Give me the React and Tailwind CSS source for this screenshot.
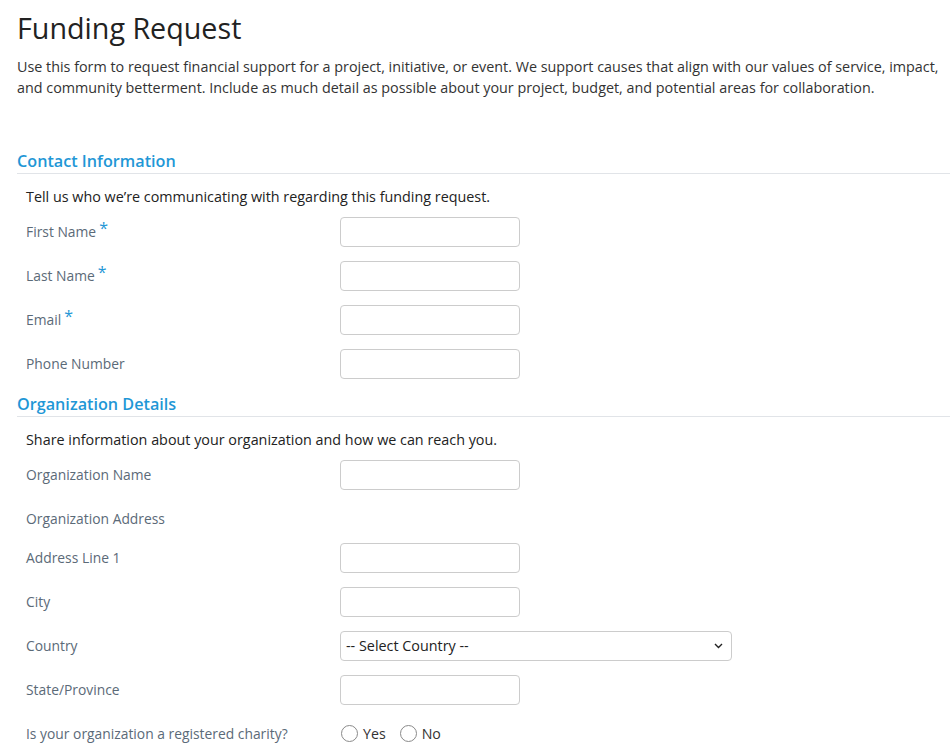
import React from 'react';

const Label = ({ children, required }) => (
    <div className="w-[314px] shrink-0 text-[13.85px] leading-[20px] text-[#5b6a78] -mt-[1px]">
        {children}
        {required && <span className="text-[#1f97d6] text-[16px] leading-none ml-[3px] relative -top-[3px]">*</span>}
    </div>
);

const TextRow = ({ label, required, className = 'mt-[14px]' }) => (
    <div className={`flex items-center h-[30px] ${className}`}>
        <Label required={required}>{label}</Label>
        <input type="text" className="w-[180px] h-[30px] border border-[#cccccc] rounded-[4px] bg-white outline-none px-2 text-[14px]" />
    </div>
);

const SectionHeading = ({ children, className = '' }) => (
    <h2 className={`text-[16.2px] font-semibold text-[#1f97d6] leading-[22px] border-b border-[#e1e4e8] pb-[1px] ${className}`}>
        {children}
    </h2>
);

const Radio = ({ label }) => (
    <label className="flex items-center gap-[5px] mr-[14px]">
        <span className="w-[17px] h-[17px] rounded-full border-[1.5px] border-[#8a8a8a] bg-white inline-block" />
        <span className="text-[14.2px] text-[#333]">{label}</span>
    </label>
);

export default function App() {
    return (
        <div className="bg-white min-h-screen pl-[17px] pt-[10px] text-[#333]" style={{ fontFamily: '"Open Sans", "Noto Sans", sans-serif' }}>
            <h1 className="text-[28.7px] leading-[36px] text-[#222] font-normal">Funding Request</h1>
            <p className="mt-[10px] text-[14.35px] leading-[21px] text-[#333] pr-1">
                Use this form to request financial support for a project, initiative, or event. We support causes that align with our values of service, impact, and community betterment. Include as much detail as possible about your project, budget, and potential areas for collaboration.
            </p>

            {/* Contact Information */}
            <SectionHeading className="mt-[52px]">Contact Information</SectionHeading>
            <div className="pl-[9px]">
                <p className="mt-[12px] text-[14.35px] leading-[21px] text-[#222]">Tell us who we’re communicating with regarding this funding request.</p>
                <TextRow label="First Name" required className="mt-[10px]" />
                <TextRow label="Last Name" required />
                <TextRow label="Email" required />
                <TextRow label="Phone Number" />
            </div>

            {/* Organization Details */}
            <SectionHeading className="mt-[14px]">Organization Details</SectionHeading>
            <div className="pl-[9px]">
                <p className="mt-[12px] text-[14.35px] leading-[21px] text-[#222]">Share information about your organization and how we can reach you.</p>
                <TextRow label="Organization Name" className="mt-[10px]" />
                <div className="flex items-center h-[30px] mt-[14px]">
                    <Label>Organization Address</Label>
                </div>
                <TextRow label="Address Line 1" className="mt-[9px]" />
                <TextRow label="City" />
                <div className="flex items-center h-[30px] mt-[14px]">
                    <Label>Country</Label>
                    <div className="relative w-[392px] h-[30px] border border-[#cccccc] rounded-[4px] bg-white flex items-center px-[5px]">
                        <span className="text-[14.35px] text-[#222]">-- Select Country --</span>
                        <svg className="absolute right-[8px] top-[11px]" width="9" height="6" viewBox="0 0 9 6" fill="none">
                            <path d="M1 1l3.5 3.5L8 1" stroke="#222" strokeWidth="1.4" />
                        </svg>
                    </div>
                </div>
                <TextRow label="State/Province" />
                <div className="flex items-center h-[30px] mt-[14px]">
                    <Label>Is your organization a registered charity?</Label>
                    <div className="flex items-center pl-[1px]">
                        <Radio label="Yes" />
                        <Radio label="No" />
                    </div>
                </div>
            </div>
        </div>
    );
}
